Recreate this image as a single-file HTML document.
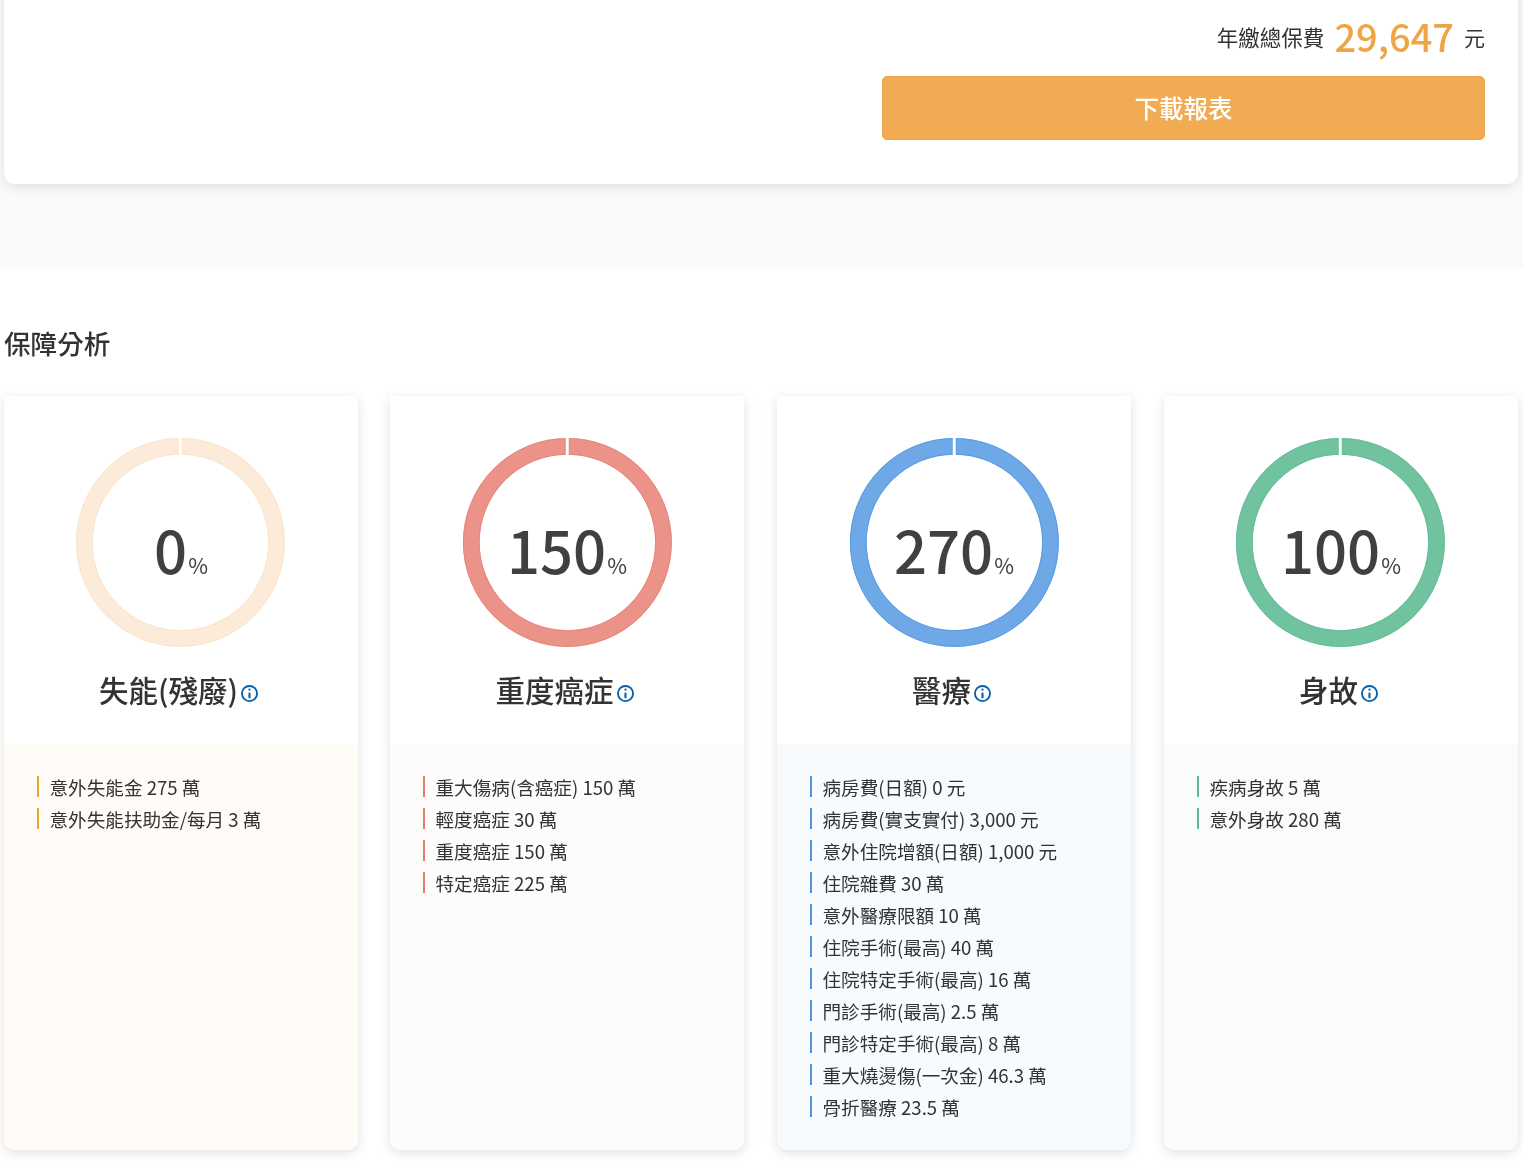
<!DOCTYPE html>
<html lang="zh-Hant">
<head>
<meta charset="utf-8">
<title>保障分析</title>
<style>
*{box-sizing:border-box;margin:0;padding:0}
html,body{width:1523px;height:1162px;overflow:hidden;background:#fff}
body{font-family:"Noto Sans CJK TC","Noto Sans CJK JP","Liberation Sans","WenQuanYi Zen Hei",sans-serif;color:#333;position:relative;will-change:transform}
.top{position:absolute;left:0;top:0;width:1523px;height:269px;background:#fafafa}
.topcard{position:absolute;left:4px;top:-40px;width:1514px;height:224px;background:#fff;border-radius:11px;box-shadow:0 3px 12px rgba(0,0,0,.11)}
.total{position:absolute;right:38px;top:14px;height:44px;display:flex;align-items:center;white-space:nowrap}
.total .lab{font-size:21.5px;color:#333;line-height:44px;position:relative;top:1px}
.total .num{font-size:38px;font-weight:500;color:#f0a545;margin:0 10px 0 10px;line-height:44px}
.total .unit{font-size:21px;color:#333;line-height:44px;position:relative;top:1px}
.btn{position:absolute;left:882px;top:76px;width:603px;height:64px;background:#f1ab53;border:1px solid #efa445;border-radius:5px;color:#fff;font-size:24.5px;font-weight:500;text-align:center;line-height:61px}
h2{position:absolute;left:4px;top:324px;font-size:26.6px;font-weight:500;line-height:38px;color:#333}
.card{position:absolute;top:396px;width:354px;height:754px;background:#fff;border-radius:3px 3px 11px 11px;box-shadow:0 3px 12px rgba(0,0,0,.12);overflow:hidden}
.c1{left:4px}.c2{left:390px}.c3{left:777px}.c4{left:1164px}
.ring{position:absolute;left:72px;top:41px;width:210px;height:210px}
.c1 .ring{left:71px}.c2 .ring{left:72px}.c3 .ring{left:72px}.c4 .ring{left:71px}
.pct{position:absolute;left:0;top:115px;width:354px;text-align:center;font-size:58px;font-weight:500;line-height:76px;color:#404040;white-space:nowrap}
.pct small{font-size:21.5px;font-weight:400;margin-left:1px}
.ttl{position:absolute;left:-2.3px;top:273px;width:354px;text-align:center;font-size:29.5px;font-weight:500;line-height:40px;color:#333;white-space:nowrap}
.ttl svg{width:17px;height:17px;vertical-align:0.4px;margin-left:3.5px;overflow:visible}
.low{position:absolute;left:0;top:348px;width:354px;height:406px;padding:26px 0 0 33px}
.c1 .low{background:#fffcf7}.c2 .low{background:#fdfcfb}.c3 .low{background:#f8fbfe}.c4 .low{background:#f9fcfb}
.low li{list-style:none;height:32px;line-height:34px;font-size:18.6px;color:#333;padding-left:12.5px;position:relative;white-space:nowrap}
.low li:before{content:"";position:absolute;left:0;top:6px;width:2px;height:21px}
.c1 li:before{background:#f0a030}.c2 li:before{background:#e87c70}.c3 li:before{background:#4f94e0}.c4 li:before{background:#5cbb92}
</style>
</head>
<body>
<div class="top">
  <div class="topcard"></div>
  <div class="total"><span class="lab">年繳總保費</span><span class="num">29,647</span><span class="unit">元</span></div>
  <div class="btn">下載報表</div>
</div>
<h2>保障分析</h2>

<div class="card c1">
  <svg class="ring" viewBox="0 0 210 210"><g transform="translate(.4 .4)"><circle cx="105" cy="105" r="96.1" fill="none" stroke="#fcebd8" stroke-width="16.75"/><circle cx="105" cy="105" r="103.95" fill="none" stroke="#fae3c8" stroke-width="1" opacity=".7"/><circle cx="105" cy="105" r="88.25" fill="none" stroke="#fae3c8" stroke-width="1" opacity=".7"/><rect x="102.5" y="0.8" width="4.7" height="16.5" fill="#fae3c8" opacity=".7"/><rect x="103.35" y="0" width="3" height="18.5" fill="#fff"/></g></svg>
  <div class="pct">0<small>%</small></div>
  <div class="ttl">失能(殘廢)<svg viewBox="0 0 17 17"><circle cx="8.5" cy="8.5" r="7.55" fill="none" stroke="#075fae" stroke-width="1.85"/><rect x="7.45" y="7.6" width="2.1" height="6" rx="1.05" fill="#075fae"/><circle cx="8.5" cy="4.6" r="1.15" fill="#075fae"/></svg></div>
  <ul class="low"><li>意外失能金 275 萬</li><li>意外失能扶助金/每月 3 萬</li></ul>
</div>

<div class="card c2">
  <svg class="ring" viewBox="0 0 210 210"><g transform="translate(.4 .4)"><circle cx="105" cy="105" r="96.1" fill="none" stroke="#eb9389" stroke-width="16.75"/><circle cx="105" cy="105" r="103.95" fill="none" stroke="#e67f74" stroke-width="1" opacity=".7"/><circle cx="105" cy="105" r="88.25" fill="none" stroke="#e67f74" stroke-width="1" opacity=".7"/><rect x="102.5" y="0.8" width="4.7" height="16.5" fill="#e67f74" opacity=".7"/><rect x="103.35" y="0" width="3" height="18.5" fill="#fff"/></g></svg>
  <div class="pct">150<small>%</small></div>
  <div class="ttl">重度癌症<svg viewBox="0 0 17 17"><circle cx="8.5" cy="8.5" r="7.55" fill="none" stroke="#075fae" stroke-width="1.85"/><rect x="7.45" y="7.6" width="2.1" height="6" rx="1.05" fill="#075fae"/><circle cx="8.5" cy="4.6" r="1.15" fill="#075fae"/></svg></div>
  <ul class="low"><li>重大傷病(含癌症) 150 萬</li><li>輕度癌症 30 萬</li><li>重度癌症 150 萬</li><li>特定癌症 225 萬</li></ul>
</div>

<div class="card c3">
  <svg class="ring" viewBox="0 0 210 210"><g transform="translate(.4 .4)"><circle cx="105" cy="105" r="96.1" fill="none" stroke="#6ea8e6" stroke-width="16.75"/><circle cx="105" cy="105" r="103.95" fill="none" stroke="#4c96e2" stroke-width="1" opacity=".7"/><circle cx="105" cy="105" r="88.25" fill="none" stroke="#4c96e2" stroke-width="1" opacity=".7"/><rect x="102.5" y="0.8" width="4.7" height="16.5" fill="#4c96e2" opacity=".7"/><rect x="103.35" y="0" width="3" height="18.5" fill="#fff"/></g></svg>
  <div class="pct">270<small>%</small></div>
  <div class="ttl">醫療<svg viewBox="0 0 17 17"><circle cx="8.5" cy="8.5" r="7.55" fill="none" stroke="#075fae" stroke-width="1.85"/><rect x="7.45" y="7.6" width="2.1" height="6" rx="1.05" fill="#075fae"/><circle cx="8.5" cy="4.6" r="1.15" fill="#075fae"/></svg></div>
  <ul class="low"><li>病房費(日額) 0 元</li><li>病房費(實支實付) 3,000 元</li><li>意外住院增額(日額) 1,000 元</li><li>住院雜費 30 萬</li><li>意外醫療限額 10 萬</li><li>住院手術(最高) 40 萬</li><li>住院特定手術(最高) 16 萬</li><li>門診手術(最高) 2.5 萬</li><li>門診特定手術(最高) 8 萬</li><li>重大燒燙傷(一次金) 46.3 萬</li><li>骨折醫療 23.5 萬</li></ul>
</div>

<div class="card c4">
  <svg class="ring" viewBox="0 0 210 210"><g transform="translate(.4 .4)"><circle cx="105" cy="105" r="96.1" fill="none" stroke="#71c3a0" stroke-width="16.75"/><circle cx="105" cy="105" r="103.95" fill="none" stroke="#5dbb94" stroke-width="1" opacity=".7"/><circle cx="105" cy="105" r="88.25" fill="none" stroke="#5dbb94" stroke-width="1" opacity=".7"/><rect x="102.5" y="0.8" width="4.7" height="16.5" fill="#5dbb94" opacity=".7"/><rect x="103.35" y="0" width="3" height="18.5" fill="#fff"/></g></svg>
  <div class="pct">100<small>%</small></div>
  <div class="ttl">身故<svg viewBox="0 0 17 17"><circle cx="8.5" cy="8.5" r="7.55" fill="none" stroke="#075fae" stroke-width="1.85"/><rect x="7.45" y="7.6" width="2.1" height="6" rx="1.05" fill="#075fae"/><circle cx="8.5" cy="4.6" r="1.15" fill="#075fae"/></svg></div>
  <ul class="low"><li>疾病身故 5 萬</li><li>意外身故 280 萬</li></ul>
</div>
</body>
</html>
